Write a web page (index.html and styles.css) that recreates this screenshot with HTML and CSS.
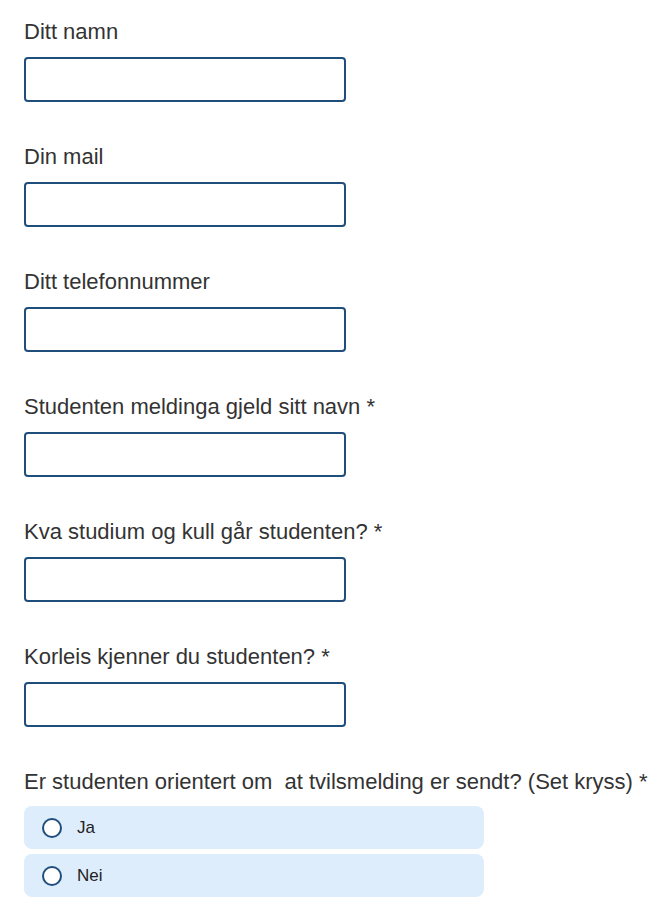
FILE: index.html
```html
<!DOCTYPE html>
<html lang="no">
<head>
<meta charset="utf-8">
<link rel="stylesheet" href="styles.css">
</head>
<body>
<form class="form">
  <div class="field">
    <label class="label">Ditt namn</label>
    <input class="input" type="text">
  </div>
  <div class="field">
    <label class="label">Din mail</label>
    <input class="input" type="text">
  </div>
  <div class="field">
    <label class="label">Ditt telefonnummer</label>
    <input class="input" type="text">
  </div>
  <div class="field">
    <label class="label">Studenten meldinga gjeld sitt navn *</label>
    <input class="input" type="text">
  </div>
  <div class="field">
    <label class="label">Kva studium og kull går studenten? *</label>
    <input class="input" type="text">
  </div>
  <div class="field">
    <label class="label">Korleis kjenner du studenten? *</label>
    <input class="input" type="text">
  </div>
  <div class="field field-radio">
    <div class="label">Er studenten orientert om&nbsp; at tvilsmelding er sendt? (Set kryss) *</div>
    <div class="options">
      <label class="option"><span class="radio"></span><span class="option-text">Ja</span></label>
      <label class="option"><span class="radio"></span><span class="option-text">Nei</span></label>
    </div>
  </div>
</form>
</body>
</html>
```
FILE: styles.css
```css
html, body {
  margin: 0;
  padding: 0;
  background: #ffffff;
}
body {
  font-family: "Liberation Sans", Arial, sans-serif;
  color: #333333;
}
.form {
  padding: 20px 0 0 24px;
  display: flex;
  flex-direction: column;
  gap: 43px;
}
.field {
  display: flex;
  flex-direction: column;
  align-items: flex-start;
  gap: 13px;
}
.field-radio {
  gap: 12px;
}
.label {
  display: block;
  font-size: 22px;
  line-height: 24px;
  color: #333333;
  white-space: nowrap;
}
.input {
  box-sizing: border-box;
  width: 322px;
  height: 45px;
  margin: 0;
  border: 2px solid #1f4e7d;
  border-radius: 4px;
  background: #ffffff;
}
.options {
  display: flex;
  flex-direction: column;
  gap: 5px;
}
.option {
  box-sizing: border-box;
  width: 460px;
  height: 43px;
  background: #deedfc;
  border-radius: 8px;
  display: flex;
  align-items: center;
  padding-left: 18px;
  gap: 15px;
}
.radio {
  box-sizing: border-box;
  width: 20px;
  height: 20px;
  border: 2px solid #1f4e7d;
  border-radius: 50%;
  background: #ffffff;
}
.option-text {
  font-size: 17px;
  color: #222222;
}
```
